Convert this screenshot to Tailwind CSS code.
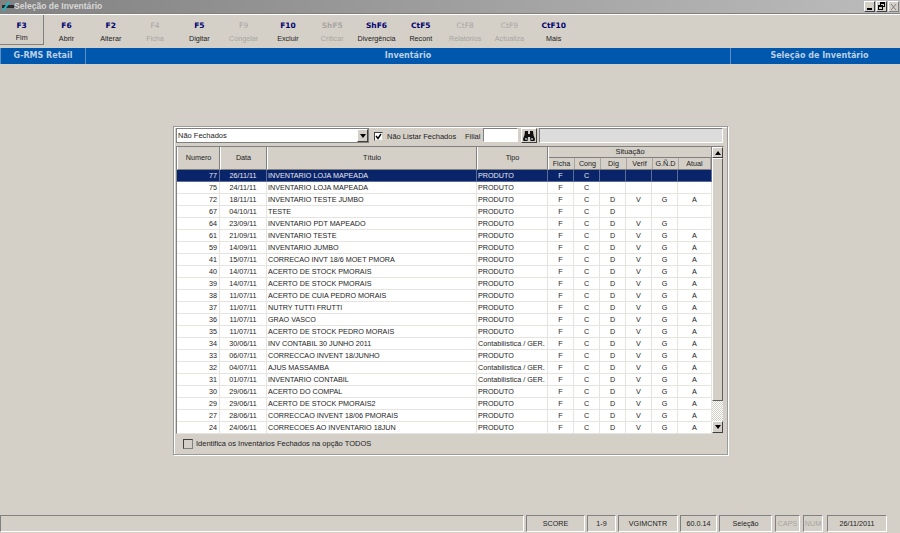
<!DOCTYPE html>
<html><head><meta charset="utf-8"><script src="https://cdn.jsdelivr.net/npm/@tailwindcss/browser@4"></script></head>
<body class="w-[900px] h-[533px] overflow-hidden bg-[#d4d0c8] font-['Liberation_Sans',sans-serif] text-[7.2px] leading-none text-[#1c1c1c] whitespace-nowrap">
<div class="flex flex-col h-[533px]">
<!-- title bar -->
<div class="h-[13px] shrink-0 flex items-center bg-gradient-to-r from-[#828282] to-[#bcbcbc] pl-[1px] pr-[1px]">
  <svg class="w-[13px] h-[11px] shrink-0" viewBox="0 0 13 11"><rect x="1" y="4" width="12" height="3" fill="#2a2a2a"/><path d="M2 10L8 1" stroke="#1fb8c8" stroke-width="2"/></svg>
  <span class="font-bold text-[8.6px] text-[#d8d8d8]">Seleção de Inventário</span>
  <div class="ml-auto flex items-center mr-[0px]">
    <div class="w-[11px] h-[11px] bg-[#d4d0c8] border border-t-white border-l-white border-r-[#404040] border-b-[#404040] flex items-end justify-center pb-[1px]"><div class="w-[5px] h-[2px] bg-black"></div></div>
    <div class="ml-[1px] w-[11px] h-[11px] bg-[#d4d0c8] border border-t-white border-l-white border-r-[#404040] border-b-[#404040] relative"><div class="absolute left-[3px] top-[0px] w-[5px] h-[5px] border border-black border-t-2"></div><div class="absolute left-[1px] top-[3px] w-[5px] h-[5px] border border-black border-t-2 bg-[#d4d0c8]"></div></div>
    <div class="ml-[1px] w-[11px] h-[11px] bg-[#d4d0c8] border border-t-white border-l-white border-r-[#808080] border-b-[#808080] flex items-center justify-center"><svg class="w-[7px] h-[6px]" viewBox="0 0 7 6"><path d="M1 0L6 6M6 0L1 6" stroke="#808080" stroke-width="1" fill="none"/></svg></div>
  </div>
</div>
<div class="h-[1px] shrink-0 bg-[#808080]"></div>
<div class="h-[1px] shrink-0 bg-white"></div>
<!-- toolbar -->
<div class="h-[33px] shrink-0 flex pr-[1px] [&>div]:w-[44.3px] [&>div]:h-[30px] [&>div]:flex [&>div]:flex-col [&>div]:items-center [&>div]:justify-between [&>div]:pt-[7px] [&>div]:pb-[3px] [&>div]:shrink-0">
  <div class="border-r border-b border-[#808080]"><b class="text-[#00006e] font-['DejaVu_Sans',sans-serif] text-[7.5px]">F3</b><span>Fim</span></div>
  <div><b class="text-[#00006e] font-['DejaVu_Sans',sans-serif] text-[7.5px]">F6</b><span>Abrir</span></div>
  <div><b class="text-[#00006e] font-['DejaVu_Sans',sans-serif] text-[7.5px]">F2</b><span>Alterar</span></div>
  <div class="text-[#a8a5a0]"><span class="font-['DejaVu_Sans',sans-serif] text-[7.5px]">F4</span><span>Ficha</span></div>
  <div><b class="text-[#00006e] font-['DejaVu_Sans',sans-serif] text-[7.5px]">F5</b><span>Digitar</span></div>
  <div class="text-[#a8a5a0]"><span class="font-['DejaVu_Sans',sans-serif] text-[7.5px]">F9</span><span>Congelar</span></div>
  <div><b class="text-[#00006e] font-['DejaVu_Sans',sans-serif] text-[7.5px]">F10</b><span>Excluir</span></div>
  <div class="text-[#a8a5a0]"><b class="font-['DejaVu_Sans',sans-serif] text-[7.5px]">ShF5</b><span>Criticar</span></div>
  <div><b class="text-[#00006e] font-['DejaVu_Sans',sans-serif] text-[7.5px]">ShF6</b><span>Divergência</span></div>
  <div><b class="text-[#00006e] font-['DejaVu_Sans',sans-serif] text-[7.5px]">CtF5</b><span>Recont</span></div>
  <div class="text-[#a8a5a0]"><span class="font-['DejaVu_Sans',sans-serif] text-[7.5px]">CtF8</span><span>Relatórios</span></div>
  <div class="text-[#a8a5a0]"><span class="font-['DejaVu_Sans',sans-serif] text-[7.5px]">CtF9</span><span>Actualiza</span></div>
  <div><b class="text-[#00006e] font-['DejaVu_Sans',sans-serif] text-[7.5px]">CtF10</b><span>Mais</span></div>
</div>
<!-- blue bar -->
<div class="h-[16px] shrink-0 flex bg-[#0057ae] text-[#bcd0e4] font-bold font-['DejaVu_Sans',sans-serif] text-[8px] items-center">
  <div class="w-[86px] h-full flex items-center justify-center border-r border-l border-[#5c8fc8]">G-RMS Retail</div>
  <div class="w-[644px] h-full flex items-center justify-center">Inventário</div>
  <div class="w-[170px] h-full flex items-center justify-center border-l border-[#5c8fc8] pl-[8px]">Seleção de Inventário</div>
</div>
<!-- main -->
<div class="flex-1">
  <div class="mt-[62px] ml-[173px] w-[555px] h-[329px] border border-[#9a9a9a] shadow-[inset_1px_1px_0_#ffffff,1px_1px_0_#ffffff] p-[2px] flex flex-col">
    <!-- filter row -->
    <div class="h-[16px] -mt-[1px] flex items-start shrink-0 text-[7.5px]">
      <div class="w-[193px] h-[15px] bg-white border border-[#808080] flex items-center justify-between pl-[1px]">Não Fechados
        <div class="w-[11px] h-[13px] bg-[#d4d0c8] border border-t-white border-l-white border-r-[#404040] border-b-[#404040] flex items-center justify-center"><div class="w-0 h-0 border-l-[3px] border-r-[3px] border-t-[4px] border-l-transparent border-r-transparent border-t-black"></div></div>
      </div>
      <div class="w-[9px] h-[9px] mt-[4px] ml-[5px] bg-white border border-t-[#404040] border-l-[#404040] border-r-[#d4d0c8] border-b-[#d4d0c8] flex items-center justify-center"><svg class="w-[7px] h-[7px]" viewBox="0 0 7 7"><path d="M1 3L3 5.5L6 1" stroke="#000" stroke-width="1.4" fill="none"/></svg></div>
      <span class="ml-[4px] mt-[5px] w-[78px]">Não Listar Fechados</span>
      <span class="mt-[5px] w-[18px]">Filial</span>
      <div class="w-[35px] h-[14px] bg-white border border-t-[#808080] border-l-[#808080] border-r-white border-b-white"></div>
      <div class="w-[16px] h-[15px] ml-[3px] bg-[#d4d0c8] border border-t-white border-l-white border-r-[#404040] border-b-[#404040] flex items-center justify-center"><svg class="w-[12px] h-[10px]" viewBox="0 0 12 10"><path d="M2 0h3v3h2V0h3l.5 4L12 8l-.5 2H7.5L7 6H5l-.5 4H.5L0 8l1.5-4z" fill="#111"/><rect x="2" y="7" width="2" height="2" fill="#8a96a4"/><rect x="8" y="7" width="2" height="2" fill="#8a96a4"/></svg></div>
      <div class="w-[184px] h-[15px] ml-[2px] bg-[#dcdcdc] border border-t-[#808080] border-l-[#808080] border-r-white border-b-white"></div>
    </div>
    <!-- table -->
    <div class="mt-[2px] w-[548px] h-[288px] shrink-0 border border-t-[#808080] border-l-[#808080] border-r-[#d4d0c8] border-b-[#d4d0c8] flex">
      <div class="w-[535px] flex flex-col">
        <!-- header -->
        <div class="h-[23px] shrink-0 flex text-center [&>div]:border-r [&>div]:border-r-[#808080] [&>div]:border-l [&>div]:border-l-white [&>div]:border-b [&>div]:border-b-[#808080]">
          <div class="w-[43px] flex items-center justify-center">Numero</div>
          <div class="w-[47px] flex items-center justify-center">Data</div>
          <div class="w-[210px] flex items-center justify-center">Título</div>
          <div class="w-[71px] flex items-center justify-center">Tipo</div>
          <div class="w-[164px] flex flex-col">
            <div class="h-[11px] flex items-center justify-center border-b border-[#808080] text-[7.5px]">Situação</div>
            <div class="flex-1 flex [&>span]:flex [&>span]:items-center [&>span]:justify-center [&>span]:border-r [&>span]:border-[#a8a5a0]"><span class="w-[26px]">Ficha</span><span class="w-[26px]">Cong</span><span class="w-[26px]">Dig</span><span class="w-[26px]">Verif</span><span class="w-[26px]">G.Ñ.D</span><span class="flex-1">Atual</span></div>
          </div>
        </div>
        <!-- rows -->
        <div class="grid grid-cols-[43px_47px_210px_71px_26px_26px_26px_26px_26px_34px] auto-rows-[12px] bg-white [&>div]:overflow-hidden [&>div]:border-r [&>div]:border-b [&>div]:border-[#e6e4de] [&>div]:flex [&>div]:items-center [&>div]:justify-center [&>div:nth-child(10n+1)]:justify-end [&>div:nth-child(10n+1)]:pr-[2px] [&>div:nth-child(10n+3)]:justify-start [&>div:nth-child(10n+3)]:pl-[1px] [&>div:nth-child(10n+4)]:justify-start [&>div:nth-child(10n+4)]:pl-[1px]">
<div class="bg-[#0a246a] text-[#e8e8f0] !border-[#5c6c98]">77</div><div class="bg-[#0a246a] text-[#e8e8f0] !border-[#5c6c98]">26/11/11</div><div class="bg-[#0a246a] text-[#e8e8f0] !border-[#5c6c98]">INVENTARIO LOJA MAPEADA</div><div class="bg-[#0a246a] text-[#e8e8f0] !border-[#5c6c98]">PRODUTO</div><div class="bg-[#0a246a] text-[#e8e8f0] !border-[#5c6c98]">F</div><div class="bg-[#0a246a] text-[#e8e8f0] !border-[#5c6c98]">C</div><div class="bg-[#0a246a] !border-[#5c6c98]"></div><div class="bg-[#0a246a] !border-[#5c6c98]"></div><div class="bg-[#0a246a] !border-[#5c6c98]"></div><div class="bg-[#0a246a] !border-[#5c6c98]"></div>
<div>75</div><div>24/11/11</div><div>INVENTARIO LOJA MAPEADA</div><div>PRODUTO</div><div>F</div><div>C</div><div></div><div></div><div></div><div></div>
<div>72</div><div>18/11/11</div><div>INVENTARIO TESTE JUMBO</div><div>PRODUTO</div><div>F</div><div>C</div><div>D</div><div>V</div><div>G</div><div>A</div>
<div>67</div><div>04/10/11</div><div>TESTE</div><div>PRODUTO</div><div>F</div><div>C</div><div>D</div><div></div><div></div><div></div>
<div>64</div><div>23/09/11</div><div>INVENTARIO PDT MAPEADO</div><div>PRODUTO</div><div>F</div><div>C</div><div>D</div><div>V</div><div>G</div><div></div>
<div>61</div><div>21/09/11</div><div>INVENTARIO TESTE</div><div>PRODUTO</div><div>F</div><div>C</div><div>D</div><div>V</div><div>G</div><div>A</div>
<div>59</div><div>14/09/11</div><div>INVENTARIO JUMBO</div><div>PRODUTO</div><div>F</div><div>C</div><div>D</div><div>V</div><div>G</div><div>A</div>
<div>41</div><div>15/07/11</div><div>CORRECAO INVT 18/6 MOET PMORA</div><div>PRODUTO</div><div>F</div><div>C</div><div>D</div><div>V</div><div>G</div><div>A</div>
<div>40</div><div>14/07/11</div><div>ACERTO DE STOCK PMORAIS</div><div>PRODUTO</div><div>F</div><div>C</div><div>D</div><div>V</div><div>G</div><div>A</div>
<div>39</div><div>14/07/11</div><div>ACERTO DE STOCK PMORAIS</div><div>PRODUTO</div><div>F</div><div>C</div><div>D</div><div>V</div><div>G</div><div>A</div>
<div>38</div><div>11/07/11</div><div>ACERTO DE CUIA PEDRO MORAIS</div><div>PRODUTO</div><div>F</div><div>C</div><div>D</div><div>V</div><div>G</div><div>A</div>
<div>37</div><div>11/07/11</div><div>NUTRY TUTTI FRUTTI</div><div>PRODUTO</div><div>F</div><div>C</div><div>D</div><div>V</div><div>G</div><div>A</div>
<div>36</div><div>11/07/11</div><div>GRAO VASCO</div><div>PRODUTO</div><div>F</div><div>C</div><div>D</div><div>V</div><div>G</div><div>A</div>
<div>35</div><div>11/07/11</div><div>ACERTO DE STOCK PEDRO MORAIS</div><div>PRODUTO</div><div>F</div><div>C</div><div>D</div><div>V</div><div>G</div><div>A</div>
<div>34</div><div>30/06/11</div><div>INV CONTABIL 30 JUNHO 2011</div><div>Contabilística / GER.</div><div>F</div><div>C</div><div>D</div><div>V</div><div>G</div><div>A</div>
<div>33</div><div>06/07/11</div><div>CORRECCAO INVENT 18/JUNHO</div><div>PRODUTO</div><div>F</div><div>C</div><div>D</div><div>V</div><div>G</div><div>A</div>
<div>32</div><div>04/07/11</div><div>AJUS MASSAMBA</div><div>Contabilística / GER.</div><div>F</div><div>C</div><div>D</div><div>V</div><div>G</div><div>A</div>
<div>31</div><div>01/07/11</div><div>INVENTARIO CONTABIL</div><div>Contabilística / GER.</div><div>F</div><div>C</div><div>D</div><div>V</div><div>G</div><div>A</div>
<div>30</div><div>29/06/11</div><div>ACERTO DO COMPAL</div><div>PRODUTO</div><div>F</div><div>C</div><div>D</div><div>V</div><div>G</div><div>A</div>
<div>29</div><div>29/06/11</div><div>ACERTO DE STOCK PMORAIS2</div><div>PRODUTO</div><div>F</div><div>C</div><div>D</div><div>V</div><div>G</div><div>A</div>
<div>27</div><div>28/06/11</div><div>CORRECCAO INVENT 18/06 PMORAIS</div><div>PRODUTO</div><div>F</div><div>C</div><div>D</div><div>V</div><div>G</div><div>A</div>
<div>24</div><div>24/06/11</div><div>CORRECOES AO INVENTARIO 18JUN</div><div>PRODUTO</div><div>F</div><div>C</div><div>D</div><div>V</div><div>G</div><div>A</div>
        </div>
      </div>
      <!-- scrollbar -->
      <div class="w-[12px] flex flex-col">
        <div class="h-[11px] bg-[#d4d0c8] border border-t-white border-l-white border-r-[#404040] border-b-[#404040] flex items-center justify-center"><div class="w-0 h-0 border-l-[3px] border-r-[3px] border-b-[4px] border-l-transparent border-r-transparent border-b-black"></div></div>
        <div class="h-[243px] bg-[#d4d0c8] border border-t-white border-l-white border-r-[#606060] border-b-[#606060]"></div>
        <div class="flex-1 bg-[repeating-conic-gradient(#d4d0c8_0_25%,#ffffff_0_50%)] bg-[length:2px_2px]"></div>
        <div class="h-[12px] bg-[#d4d0c8] border border-t-white border-l-white border-r-[#404040] border-b-[#404040] flex items-center justify-center"><div class="w-0 h-0 border-l-[3px] border-r-[3px] border-t-[4px] border-l-transparent border-r-transparent border-t-black"></div></div>
      </div>
    </div>
    <div class="flex items-center mt-[5px] ml-[7px] text-[7.5px]">
      <div class="w-[10px] h-[10px] border border-t-[#404040] border-l-[#404040] border-r-[#808080] border-b-[#808080]"></div>
      <span class="ml-[3px]">Identifica os Inventários Fechados na opção TODOS</span>
    </div>
  </div>
</div>
<!-- status bar -->
<div class="h-[18px] pb-[1px] shrink-0 flex [&>div]:flex [&>div]:items-center [&>div]:justify-center [&>div]:border [&>div]:border-t-[#808080] [&>div]:border-l-[#808080] [&>div]:border-r-white [&>div]:border-b-white">
  <div class="w-[524px] mr-[2px]"></div>
  <div class="w-[59px] mr-[2px]">SCORE</div>
  <div class="w-[29px] mr-[2px]">1-9</div>
  <div class="w-[60px] mr-[2px]">VGIMCNTR</div>
  <div class="w-[37px] mr-[2px]">60.0.14</div>
  <div class="w-[53px] mr-[3px]">Seleção</div>
  <div class="w-[25px] mr-[3px] text-[#a8a5a0]">CAPS</div>
  <div class="w-[20px] mr-[4px] text-[#a8a5a0]">NUM</div>
  <div class="w-[60px]">26/11/2011</div>
</div>
</div>
</body></html>
